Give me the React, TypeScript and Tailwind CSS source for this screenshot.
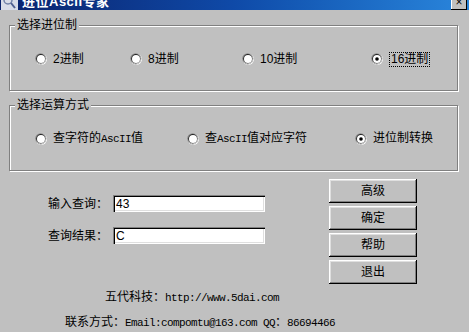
import React from "react";

const cjk = { fontFamily: '"Liberation Sans", "Noto Sans CJK SC", sans-serif' };
const mono = { fontFamily: '"Liberation Mono", "Noto Sans CJK SC", monospace' };

const Radio = ({ checked }: { checked?: boolean }) => (
   <svg width="12" height="12" viewBox="0 0 12 12" className="shrink-0">
      <circle cx="6.2" cy="6.2" r="5.8" fill="#ffffff" />
      <circle cx="5.8" cy="5.8" r="5.6" fill="#808080" />
      <circle cx="6.1" cy="6.1" r="5" fill="#dfdfdf" />
      <circle cx="5.8" cy="5.8" r="4.7" fill="#202020" />
      <circle cx="6" cy="6" r="4" fill="#ffffff" />
      {checked && <circle cx="6" cy="6" r="1.8" fill="#000" />}
   </svg>
);

const Asc = ({ children }: { children: React.ReactNode }) => (
   <span style={mono} className="text-[11px] tracking-[-0.6px]">
      {children}
   </span>
);

interface OptProps {
   label: React.ReactNode;
   checked?: boolean;
   focus?: boolean;
   w?: string;
}

const Option = ({ label, checked, focus, w }: OptProps) => (
   <div className={`flex items-center gap-[6px] ${w ?? ""}`}>
      <Radio checked={checked} />
      <span
         className={
            focus
               ? "border border-dotted border-black px-[1px] leading-[13px]"
               : "leading-[13px]"
         }
      >
         {label}
      </span>
   </div>
);

const Group = ({
   title,
   className,
   children,
}: {
   title: string;
   className?: string;
   children: React.ReactNode;
}) => (
   <div
      className={`relative h-[66px] w-[449px] border border-[#808080] shadow-[inset_1px_1px_0_#fff,1px_1px_0_#fff] ${className ?? ""}`}
   >
      <span className="absolute -top-[8px] left-[5px] bg-[#c0c0c0] px-[2px] leading-[14px]">
         {title}
      </span>
      {children}
   </div>
);

const Btn = ({ children }: { children: React.ReactNode }) => (
   <button className="flex h-[24px] w-[88px] items-center justify-center bg-[#c0c0c0] shadow-[inset_-1px_-1px_0_#000,inset_1px_1px_0_#fff,inset_-2px_-2px_0_#808080,inset_2px_2px_0_#dfdfdf]">
      {children}
   </button>
);

const Field = ({ label, value }: { label: string; value: string }) => (
   <div className="flex items-center">
      <span className="w-[65px] leading-[14px]">{label}</span>
      <div className="flex h-[17px] w-[152px] items-center bg-white pl-[3px] shadow-[inset_1px_1px_0_#808080,inset_2px_2px_0_#000,inset_-1px_-1px_0_#fff,inset_-2px_-2px_0_#dfdfdf]">
         {value}
      </div>
   </div>
);

export default function App() {
   return (
      <div
         style={cjk}
         className="h-[332px] w-[469px] overflow-hidden bg-[#c0c0c0] text-[12px] text-black"
      >
         {/* title bar, mostly scrolled off */}
         <div className="h-[10px] overflow-hidden bg-gradient-to-r from-[#0a226c] via-[#0f4aa8] to-[#2a86dc]">
            <div className="-mt-[6px] flex h-[16px] items-center">
               <svg width="20" height="16" viewBox="0 0 20 16" className="shrink-0">
                  <rect x="1" y="0" width="17" height="16" fill="#d8dce8" />
                  <circle cx="8" cy="6" r="4" fill="none" stroke="#7080a8" strokeWidth="1.5" />
                  <line x1="11" y1="9" x2="15" y2="14" stroke="#506090" strokeWidth="2" />
               </svg>
               <span className="ml-[2px] text-[13px] font-bold tracking-[0.5px] text-white">
                  进位AscII专家
               </span>
               <div className="ml-auto mr-[2px] mt-[2px] flex h-[14px] w-[16px] items-start justify-center bg-[#c0c0c0] text-[12px] leading-[12px] shadow-[inset_-1px_-1px_0_#000,inset_1px_1px_0_#fff]">
                  ×
               </div>
            </div>
         </div>

         <div className="px-[9px]">
            <Group title="选择进位制" className="mt-[15px]">
               <div className="flex h-full items-center pl-[25px] pt-[2px]">
                  <Option w="w-[95px]" label="2进制" />
                  <Option w="w-[112px]" label="8进制" />
                  <Option w="w-[129px]" label="10进制" />
                  <Option checked focus label="16进制" />
               </div>
            </Group>

            <Group title="选择运算方式" className="mt-[14px]">
               <div className="flex h-full items-center pl-[25px] pt-[1px]">
                  <Option
                     w="w-[152px]"
                     label={
                        <>
                           查字符的<Asc>AscII</Asc>值
                        </>
                     }
                  />
                  <Option
                     w="w-[168px]"
                     label={
                        <>
                           查<Asc>AscII</Asc>值对应字符
                        </>
                     }
                  />
                  <Option checked label="进位制转换" />
               </div>
            </Group>
         </div>

         <div className="mt-[8px] flex">
            <div className="flex w-[329px] flex-col gap-[15px] pl-[48px] pt-[16px]">
               <Field label="输入查询：" value="43" />
               <Field label="查询结果：" value="C" />
            </div>
            <div className="flex flex-col gap-[3px]">
               <Btn>高级</Btn>
               <Btn>确定</Btn>
               <Btn>帮助</Btn>
               <Btn>退出</Btn>
            </div>
         </div>

         <div className="mt-[6px] pl-[105px] leading-[14px]">
            五代科技：<Asc>http://www.5dai.com</Asc>
         </div>
         <div className="mt-[10px] pl-[65px] leading-[14px]">
            联系方式：<Asc>Email:compomtu@163.com QQ</Asc>：<Asc>86694466</Asc>
         </div>
      </div>
   );
}
